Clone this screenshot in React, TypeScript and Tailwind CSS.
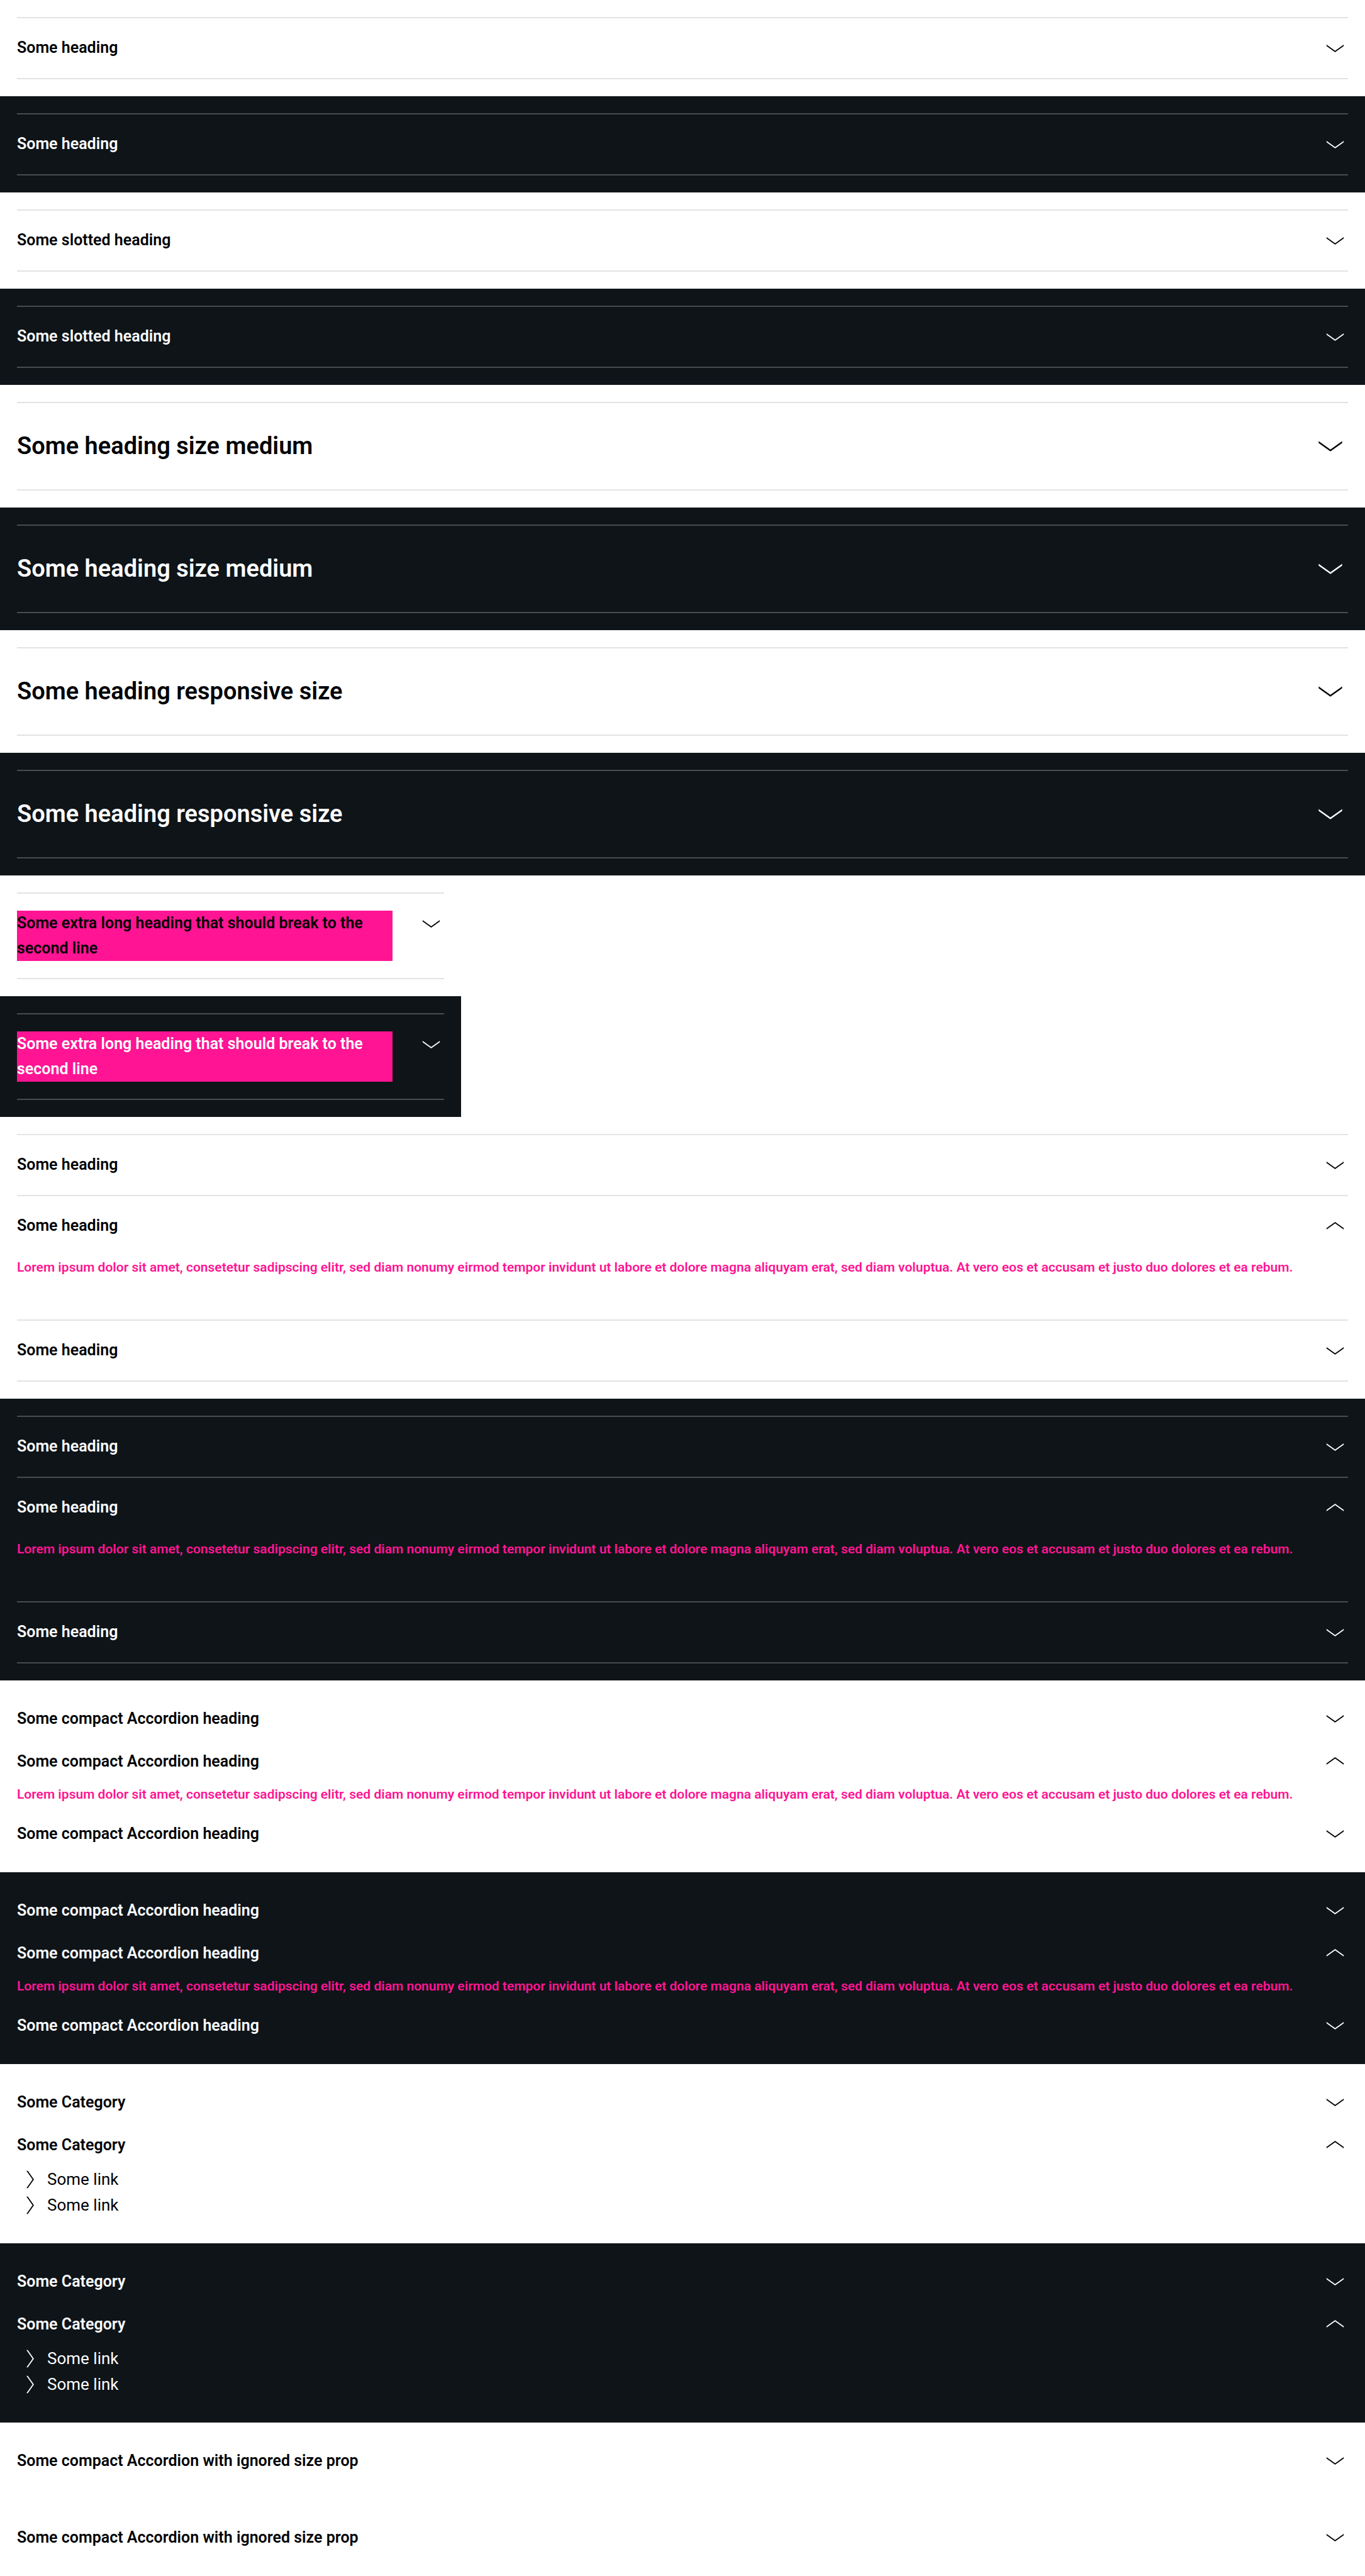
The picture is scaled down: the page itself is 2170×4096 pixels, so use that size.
import { useState } from "react";
import type { ReactNode } from "react";

type Size = "small" | "medium" | "compact";

const LOREM =
  "Lorem ipsum dolor sit amet, consetetur sadipscing elitr, sed diam nonumy eirmod tempor invidunt ut labore et dolore magna aliquyam erat, sed diam voluptua. At vero eos et accusam et justo duo dolores et ea rebum.";

const rowStyles: Record<Size, string> = {
  small: "min-h-[95px] py-[27px] text-[25px] leading-[40px]",
  medium: "min-h-[137px] py-10 text-[38px] leading-[56px]",
  compact: "min-h-[68px] py-[14px] text-[25px] leading-[40px]",
};

const iconStyles: Record<Size, string> = {
  small: "size-[41px]",
  medium: "size-[56px]",
  compact: "size-[41px] -my-px",
};

function Chevron({ className }: { className: string }) {
  return (
    <svg viewBox="0 0 24 24" fill="currentColor" aria-hidden="true" className={`shrink-0 ${className}`}>
      <path d="M12 15.8 4 10.1V8.8l8 5.7 8-5.7v1.3z" />
    </svg>
  );
}

function Section({ dark = false, narrow = false, children }: { dark?: boolean; narrow?: boolean; children: ReactNode }) {
  return (
    <section
      className={`p-[27px] ${narrow ? "w-[733px]" : "w-full"} ${
        dark ? "bg-[#0e1418] text-[#fbfcff] [--line:#494c4f]" : "bg-white text-[#010205] [--line:#e3e3e4]"
      }`}
    >
      {children}
    </section>
  );
}

type AccordionProps = {
  heading: string;
  size?: Size;
  initiallyOpen?: boolean;
  highlight?: boolean;
  joined?: boolean;
  children?: ReactNode;
};

function Accordion({ heading, size = "small", initiallyOpen = false, highlight = false, joined = false, children }: AccordionProps) {
  const [open, setOpen] = useState(initiallyOpen);
  const lines = size === "compact" ? "" : joined ? "border-b-2" : "border-y-2";
  return (
    <div className={`border-[var(--line)] ${lines}`}>
      <h2>
        <button
          type="button"
          aria-expanded={open}
          onClick={() => setOpen(!open)}
          className={`flex w-full items-start justify-between gap-[41px] text-left font-semibold ${rowStyles[size]}`}
        >
          <span className={highlight ? "flex-1 bg-[#ff1493]" : ""}>{heading}</span>
          <Chevron className={`${iconStyles[size]} ${open ? "rotate-180" : ""}`} />
        </button>
      </h2>
      {open && children}
    </div>
  );
}

function Lorem({ compact = false }: { compact?: boolean }) {
  return (
    <div className={compact ? "pb-[11px]" : "pb-[65px]"}>
      <p className="text-[21px] leading-9 font-semibold text-[#ff1493]">{LOREM}</p>
    </div>
  );
}

function Links() {
  return (
    <ul className="pb-[13px]">
      {[1, 2].map((n) => (
        <li key={n}>
          <a href="#" className="flex items-center gap-[7px] text-[26px] leading-[41px]">
            <Chevron className="size-[41px] -rotate-90" />
            Some link
          </a>
        </li>
      ))}
    </ul>
  );
}

const THEMES = [false, true];

export default function App() {
  return (
    <main className="w-full bg-white font-['Roboto',sans-serif]">
      {["Some heading", "Some slotted heading"].map((heading) =>
        THEMES.map((dark) => (
          <Section key={`${heading}${dark}`} dark={dark}>
            <Accordion heading={heading} />
          </Section>
        )),
      )}
      {["Some heading size medium", "Some heading responsive size"].map((heading) =>
        THEMES.map((dark) => (
          <Section key={`${heading}${dark}`} dark={dark}>
            <Accordion heading={heading} size="medium" />
          </Section>
        )),
      )}
      {THEMES.map((dark) => (
        <Section key={`long${dark}`} dark={dark} narrow>
          <Accordion heading="Some extra long heading that should break to the second line" highlight />
        </Section>
      ))}
      {THEMES.map((dark) => (
        <Section key={`group${dark}`} dark={dark}>
          <Accordion heading="Some heading" />
          <Accordion heading="Some heading" joined initiallyOpen>
            <Lorem />
          </Accordion>
          <Accordion heading="Some heading" joined />
        </Section>
      ))}
      {THEMES.map((dark) => (
        <Section key={`compact${dark}`} dark={dark}>
          <Accordion heading="Some compact Accordion heading" size="compact" />
          <Accordion heading="Some compact Accordion heading" size="compact" initiallyOpen>
            <Lorem compact />
          </Accordion>
          <Accordion heading="Some compact Accordion heading" size="compact" />
        </Section>
      ))}
      {THEMES.map((dark) => (
        <Section key={`category${dark}`} dark={dark}>
          <Accordion heading="Some Category" size="compact" />
          <Accordion heading="Some Category" size="compact" initiallyOpen>
            <Links />
          </Accordion>
        </Section>
      ))}
      {[1, 2].map((n) => (
        <Section key={`ignored${n}`}>
          <Accordion heading="Some compact Accordion with ignored size prop" size="compact" />
        </Section>
      ))}
    </main>
  );
}
